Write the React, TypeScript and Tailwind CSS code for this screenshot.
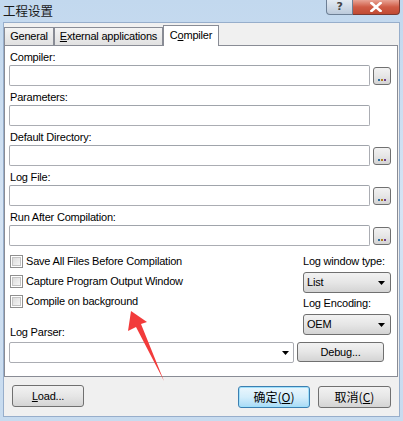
import React from 'react'

const face =
  'border border-[#707070] rounded-[3px] bg-gradient-to-b from-[#f2f2f2] via-[#e6e6e6] to-[#d4d4d4] text-black'
const btn = `flex items-center justify-center ${face}`

function BrowseButton() {
  return (
    <div className={`${face} flex justify-center items-end pb-[3px] ml-[3px] w-[18px] h-[18px] rounded-[2px]`}>
      <div className="flex gap-[1px]">
        <span className="w-[2px] h-[2px] bg-[#2f6f9f]" />
        <span className="w-[2px] h-[2px] bg-[#b08020]" />
        <span className="w-[2px] h-[2px] bg-[#6f3f8f]" />
      </div>
    </div>
  )
}

function TextInput({ width }: { width: number }) {
  return (
    <div
      className="h-[21px] bg-white border border-[#abadb3] border-t-[#a0a4ab] rounded-[2px]"
      style={{ width }}
    />
  )
}

function Field({ label, browse = true }: { label: string; browse?: boolean }) {
  return (
    <div className="flex flex-col">
      <div className="h-[15px] leading-[15px] pl-[1px]">{label}</div>
      <div className="flex items-center">
        <TextInput width={361} />
        {browse && <BrowseButton />}
      </div>
    </div>
  )
}

function Checkbox({ label }: { label: string }) {
  return (
    <div className="h-[20px] flex items-center pl-[1px]">
      <div className="w-[13px] h-[13px] border border-[#8f8f8f] bg-white p-[1px]">
        <div className="w-full h-full bg-gradient-to-br from-[#dcdcdc] to-[#f6f6f6] border border-[#c4c4c4]" />
      </div>
      <span className="ml-[3px]">{label}</span>
    </div>
  )
}

function Triangle() {
  return (
    <svg width="7" height="4" viewBox="0 0 7 4">
      <path d="M0 0H7L3.5 4Z" fill="#000" />
    </svg>
  )
}

function Select({ value }: { value: string }) {
  return (
    <div className={`${face} flex items-center justify-between h-[21px] w-[88px] pl-[3px] pr-[5px]`}>
      <span>{value}</span>
      <Triangle />
    </div>
  )
}

function Tab({ before, under, after, selected = false, width }: { before: string; under: string; after: string; selected?: boolean; width: number }) {
  return (
    <div
      className={
        selected
          ? 'relative z-10 h-[21px] mb-[-1px] bg-white border border-b-0 border-[#898c95] flex items-center justify-center pb-[1px]'
          : 'h-[18px] bg-gradient-to-b from-[#f4f4f4] to-[#e1e1e1] border border-b-0 border-[#898c95] flex items-center justify-center'
      }
      style={{ width }}
    >
      <span className="whitespace-pre">
        {before}
        <span className="underline">{under}</span>
        {after}
      </span>
    </div>
  )
}

export default function App() {
  return (
    <div className="relative w-[403px] h-[421px] flex flex-col bg-gradient-to-b from-[#c2d8ee] via-[#d5e4f4] to-[#c7dbef] font-['Liberation_Sans',sans-serif] text-[11px] tracking-[-0.2px] text-black overflow-hidden">
      {/* title bar */}
      <div className="h-[22px] flex justify-between items-start shrink-0">
        <div className="pl-[3px] pt-[2px] text-[12.5px] tracking-normal font-['Noto_Sans_CJK_SC',sans-serif] leading-[17px] text-[#1a1a1a]">
          工程设置
        </div>
        <div className="flex mr-[3px]">
          <div className="w-[27px] h-[15px] border border-t-0 border-[#6d7f95] rounded-bl-[4px] bg-gradient-to-b from-[#e4ebf3] to-[#bccadb] flex items-center justify-center text-[11px] font-bold text-[#444] font-['DejaVu_Sans',sans-serif]">
            ?
          </div>
          <div className="w-[47px] h-[15px] border border-t-0 border-l-0 border-[#7a3a32] rounded-br-[4px] bg-gradient-to-b from-[#e8a395] via-[#cf5b45] to-[#c14b34] flex items-center justify-center">
            <svg width="12" height="10" viewBox="0 0 12 10">
              <path d="M1.5 1L10.5 9M10.5 1L1.5 9" stroke="#fff" strokeWidth="2.6" strokeLinecap="square" />
            </svg>
          </div>
        </div>
      </div>

      {/* client area */}
      <div className="mx-[3px] mb-[4px] flex-1 bg-[#f0f0f0] border border-[#97aecb] flex flex-col pt-[1px]">
        {/* tabs */}
        <div className="h-[21px] flex items-end">
          <Tab before="General" under="" after="" width={50} />
          <Tab before="" under="E" after="xternal applications" width={109} />
          <Tab before="C" under="o" after="mpiler" selected width={56} />
        </div>

        {/* panel */}
        <div className="w-[394px] h-[332px] bg-white border border-[#898c95] flex flex-col pl-[4px] pr-[6px] pt-[4px] gap-[4px]">
          <Field label="Compiler:" />
          <Field label="Parameters:" browse={false} />
          <Field label="Default Directory:" />
          <Field label="Log File:" />
          <Field label="Run After Compilation:" />

          <div className="flex mt-[1px]">
            <div className="flex-1 flex flex-col">
              <Checkbox label="Save All Files Before Compilation" />
              <Checkbox label="Capture Program Output Window" />
              <Checkbox label="Compile on background" />
              <div className="h-[15px] leading-[15px] pl-[1px] mt-[14px]">Log Parser:</div>
            </div>
            <div className="w-[88px] flex flex-col">
              <div className="h-[20px] leading-[20px]">Log window type:</div>
              <div className="mt-[1px]">
                <Select value="List" />
              </div>
              <div className="h-[20px] leading-[20px]">Log Encoding:</div>
              <div className="mt-[1px]">
                <Select value="OEM" />
              </div>
            </div>
          </div>

          <div className="flex items-start mt-[-2px]">
            <div className="w-[285px] h-[21px] bg-white border border-[#abadb3] rounded-[2px] flex items-center justify-end pr-[4px]">
              <Triangle />
            </div>
            <div className={`${btn} ml-[3px] w-[87px] h-[20px]`}>Debug...</div>
          </div>
        </div>

        {/* bottom buttons */}
        <div className="flex items-start pl-[8px] mt-[8px]">
          <div className={`${btn} w-[72px] h-[22px]`}>
            <span className="underline">L</span>oad...
          </div>
          <div className="flex-1" />
          <div className="w-[72px] h-[22px] mt-[1px] flex items-center justify-center border border-[#3c7fb1] rounded-[3px] bg-gradient-to-b from-[#eaf6fd] via-[#d4eefb] to-[#a9dbf6] shadow-[inset_0_0_0_1px_#9fe0fb] font-['Noto_Sans_CJK_SC',sans-serif] text-[12px] tracking-normal">
            确定(<span className="underline">O</span>)
          </div>
          <div className={`${btn} w-[73px] h-[22px] mt-[1px] ml-[8px] mr-[8px] font-['Noto_Sans_CJK_SC',sans-serif] text-[12px] tracking-normal`}>
            取消(<span className="underline">C</span>)
          </div>
        </div>
      </div>

      {/* red annotation arrow */}
      <svg className="absolute left-0 top-0 pointer-events-none" width="403" height="421" viewBox="0 0 403 421">
        <polygon points="131,311 147,322 141,324 164,381 136,327 128,331" fill="#f23b3b" />
      </svg>
    </div>
  )
}
